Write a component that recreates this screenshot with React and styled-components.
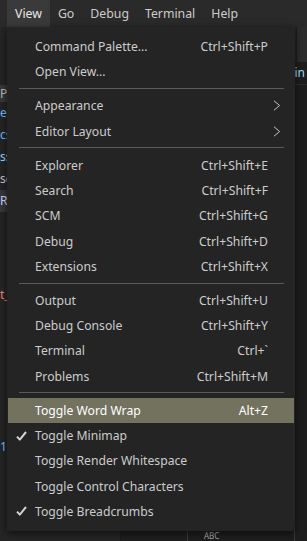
import styled, { createGlobalStyle } from "styled-components";

const GlobalStyle = createGlobalStyle`
  html, body {
    margin: 0;
    padding: 0;
    background: #1e1e1e;
  }
  body {
    font-family: "Noto Sans", "Open Sans", sans-serif;
    font-size: 12px;
    color: #cccccc;
  }
`;

const topMenus = ["View", "Go", "Debug", "Terminal", "Help"];

const menu = [
  { label: "Command Palette...", keys: "Ctrl+Shift+P" },
  { label: "Open View..." },
  "sep",
  { label: "Appearance", sub: true },
  { label: "Editor Layout", sub: true },
  "sep",
  { label: "Explorer", keys: "Ctrl+Shift+E" },
  { label: "Search", keys: "Ctrl+Shift+F" },
  { label: "SCM", keys: "Ctrl+Shift+G" },
  { label: "Debug", keys: "Ctrl+Shift+D" },
  { label: "Extensions", keys: "Ctrl+Shift+X" },
  "sep",
  { label: "Output", keys: "Ctrl+Shift+U" },
  { label: "Debug Console", keys: "Ctrl+Shift+Y" },
  { label: "Terminal", keys: "Ctrl+`" },
  { label: "Problems", keys: "Ctrl+Shift+M" },
  "sep",
  { label: "Toggle Word Wrap", keys: "Alt+Z", active: true },
  { label: "Toggle Minimap", checked: true },
  { label: "Toggle Render Whitespace" },
  { label: "Toggle Control Characters" },
  { label: "Toggle Breadcrumbs", checked: true },
];

const sideRows = [
  { text: "e", color: "#75beff" },
  { text: "cs", color: "#75beff" },
  { text: "ss", color: "#9cdcfe" },
  { text: "sc", color: "#cccccc" },
  { text: "RI", color: "#d7dbff", selected: true },
];

function Check() {
  return (
    <svg width="11" height="10" viewBox="0 0 11 10">
      <path d="M1 5.6 L3.8 8.6 L10 1" fill="none" stroke="#d4d4d4" strokeWidth="2" strokeLinejoin="round" />
    </svg>
  );
}

function Chevron() {
  return (
    <svg width="8" height="11" viewBox="0 0 8 11">
      <path d="M1 0.8 L6.6 5.5 L1 10.2" fill="none" stroke="#c5c5c5" strokeWidth="1" />
    </svg>
  );
}

export default function App() {
  return (
    <Page>
      <GlobalStyle />
      <MenuBar>
        {topMenus.map((m, i) => (
          <TopItem key={m} $open={i === 0}>
            {m}
          </TopItem>
        ))}
      </MenuBar>
      <Workbench>
        <Sidebar>
          <SideSpacer />
          <SideHeader>P</SideHeader>
          {sideRows.map((r, i) => (
            <SideRow key={i} $selected={r.selected} style={{ color: r.color }}>
              {r.text}
            </SideRow>
          ))}
          <SideGap />
          <SideRow style={{ color: "#f48771" }}>t_</SideRow>
          <SideFill />
          <SideRow style={{ color: "#75beff" }}>1</SideRow>
        </Sidebar>
        <Editor>
          <TabBar>
            <Tab />
          </TabBar>
          <Crumbs>in</Crumbs>
          <EditorBody>
            <FindBox>ABC</FindBox>
          </EditorBody>
        </Editor>
      </Workbench>

      <Dropdown>
        {menu.map((item, i) =>
          item === "sep" ? (
            <Separator key={i} />
          ) : (
            <Item key={i} $active={item.active}>
              <CheckCol>{item.checked ? <Check /> : null}</CheckCol>
              <Label>{item.label}</Label>
              {item.keys ? <Keys>{item.keys}</Keys> : null}
              {item.sub ? (
                <Arrow>
                  <Chevron />
                </Arrow>
              ) : null}
            </Item>
          )
        )}
      </Dropdown>
    </Page>
  );
}

const Page = styled.div`
  position: relative;
  width: 307px;
  height: 541px;
  overflow: hidden;
  background: #1e1e1e;
`;

const MenuBar = styled.div`
  display: flex;
  height: 27px;
  padding-left: 7px;
  background: #2a2a2a;
`;

const TopItem = styled.div`
  display: flex;
  align-items: center;
  padding: 0 8px;
  height: 27px;
  font-size: 12.3px;
  color: ${(p) => (p.$open ? "#e8e8e8" : "#cccccc")};
  background: ${(p) => (p.$open ? "#3a3a3a" : "transparent")};
`;

const Workbench = styled.div`
  display: flex;
  height: 514px;
`;

const Sidebar = styled.div`
  width: 120px;
  display: flex;
  flex-direction: column;
  background: #252526;
  border-right: 1px solid #1b1b1b;
`;

const SideSpacer = styled.div`
  height: 58px;
`;

const SideHeader = styled.div`
  height: 17px;
  line-height: 17px;
  color: #bbbbbb;
  background: #383838;
`;

const SideRow = styled.div`
  height: 22px;
  line-height: 22px;
  color: #cccccc;
  background: ${(p) => (p.$selected ? "#37373d" : "transparent")};
`;

const SideGap = styled.div`
  height: 72px;
`;

const SideFill = styled.div`
  height: 130px;
`;

const Editor = styled.div`
  flex: 1;
  display: flex;
  flex-direction: column;
`;

const TabBar = styled.div`
  height: 35px;
  display: flex;
  justify-content: flex-end;
  background: #252526;
`;

const Tab = styled.div`
  width: 10px;
  background: #2d2d2d;
  border-left: 1px solid #1e1e1e;
`;

const Crumbs = styled.div`
  height: 22px;
  line-height: 22px;
  text-align: right;
  padding-right: 2px;
  color: #9cdcfe;
  border-bottom: 1px solid #2d2d2d;
`;

const EditorBody = styled.div`
  flex: 1;
  display: flex;
  align-items: flex-end;
  justify-content: flex-end;
  background: #1e1e1e;
`;

const FindBox = styled.div`
  width: 90px;
  height: 11px;
  margin-right: 12px;
  padding-left: 16px;
  font-size: 8px;
  line-height: 11px;
  color: #aaaaaa;
  border-left: 1px solid #3c3c3c;
  border-right: 1px solid #3c3c3c;
`;

const Dropdown = styled.div`
  position: absolute;
  top: 27px;
  left: 7px;
  width: 288px;
  box-sizing: border-box;
  padding: 7px 0 6.5px;
  background: #242424;
  box-shadow: 0 2px 8px rgba(0, 0, 0, 0.6);
`;

const Item = styled.div`
  display: flex;
  align-items: center;
  height: 25.3px;
  margin: 0 1px;
  font-size: 12.2px;
  color: ${(p) => (p.$active ? "#ffffff" : "#cccccc")};
  background: ${(p) => (p.$active ? "#73725f" : "transparent")};
`;

const CheckCol = styled.div`
  width: 27px;
  display: flex;
  justify-content: center;
  align-items: center;
`;

const Label = styled.span`
  flex: 1;
  white-space: nowrap;
`;

const Keys = styled.span`
  padding-right: 26px;
  white-space: nowrap;
`;

const Arrow = styled.span`
  display: flex;
  margin-right: 13px;
`;

const Separator = styled.div`
  height: 1px;
  margin: 3.5px 11px 4.2px 12px;
  background: #5a5a5a;
`;
